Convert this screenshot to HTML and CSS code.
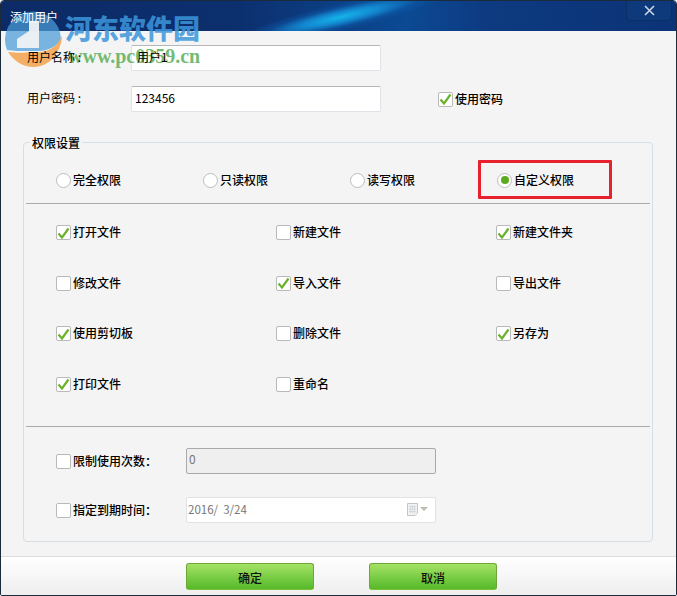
FILE: index.html
```html
<!DOCTYPE html>
<html lang="zh-CN">
<head>
    <meta charset="UTF-8">
    <meta name="viewport" content="width=device-width, initial-scale=1.0">
    <title>添加用户</title>
    <link rel="stylesheet" href="styles.css">
</head>
<body>
    <div class="window">
        <div class="titlebar">
            <span class="title">添加用户</span>
            <button class="close-btn">
                <svg width="11" height="11" viewBox="0 0 11 11"><path d="M1 1L10 10M10 1L1 10" stroke="#c9d6e6" stroke-width="1.6" fill="none"/></svg>
            </button>
        </div>

        <div class="content">
            <div class="user-rows">
                <div class="user-row">
                    <span class="user-label">用户名称 :</span>
                    <div class="field"><span class="name-text">用户1</span></div>
                </div>
                <div class="user-row">
                    <span class="user-label">用户密码 :</span>
                    <div class="field"><span>123456</span></div>
                    <label class="check use-pwd"><span class="box checked"><svg width="13" height="12" viewBox="0 0 13 12"><path d="M1.5 6.5L5 10.5L11.5 1.5" stroke="#6cb12c" stroke-width="2.2" fill="none"/></svg></span>使用密码</label>
                </div>
            </div>

            <div class="group">
                <span class="legend">权限设置</span>

                <div class="radios">
                    <label class="radio"><span class="dot"></span>完全权限</label>
                    <label class="radio"><span class="dot"></span>只读权限</label>
                    <label class="radio"><span class="dot"></span>读写权限</label>
                    <label class="radio"><span class="dot on"></span>自定义权限</label>
                </div>

                <div class="perms">
                    <label class="check"><span class="box checked"><svg width="13" height="12" viewBox="0 0 13 12"><path d="M1.5 6.5L5 10.5L11.5 1.5" stroke="#6cb12c" stroke-width="2.2" fill="none"/></svg></span>打开文件</label>
                    <label class="check"><span class="box"></span>新建文件</label>
                    <label class="check"><span class="box checked"><svg width="13" height="12" viewBox="0 0 13 12"><path d="M1.5 6.5L5 10.5L11.5 1.5" stroke="#6cb12c" stroke-width="2.2" fill="none"/></svg></span>新建文件夹</label>
                    <label class="check"><span class="box"></span>修改文件</label>
                    <label class="check"><span class="box checked"><svg width="13" height="12" viewBox="0 0 13 12"><path d="M1.5 6.5L5 10.5L11.5 1.5" stroke="#6cb12c" stroke-width="2.2" fill="none"/></svg></span>导入文件</label>
                    <label class="check"><span class="box"></span>导出文件</label>
                    <label class="check"><span class="box checked"><svg width="13" height="12" viewBox="0 0 13 12"><path d="M1.5 6.5L5 10.5L11.5 1.5" stroke="#6cb12c" stroke-width="2.2" fill="none"/></svg></span>使用剪切板</label>
                    <label class="check"><span class="box"></span>删除文件</label>
                    <label class="check"><span class="box checked"><svg width="13" height="12" viewBox="0 0 13 12"><path d="M1.5 6.5L5 10.5L11.5 1.5" stroke="#6cb12c" stroke-width="2.2" fill="none"/></svg></span>另存为</label>
                    <label class="check"><span class="box checked"><svg width="13" height="12" viewBox="0 0 13 12"><path d="M1.5 6.5L5 10.5L11.5 1.5" stroke="#6cb12c" stroke-width="2.2" fill="none"/></svg></span>打印文件</label>
                    <label class="check"><span class="box"></span>重命名</label>
                </div>

                <div class="limits">
                    <div class="limit-row">
                        <label class="check limit-label"><span class="box"></span>限制使用次数：</label>
                        <div class="field limit-field disabled">0</div>
                    </div>
                    <div class="limit-row">
                        <label class="check limit-label"><span class="box"></span>指定到期时间：</label>
                        <div class="field limit-field date">
                            <span>2016/&nbsp; 3/24</span>
                            <span class="date-icons">
                                <svg width="11" height="13" viewBox="0 0 11 13"><path d="M.5.5H10.5V10L8 12.5H.5Z" fill="#f2f2f2" stroke="#c4c4c4"/><path d="M2 3.5H9M2 6H9M2 8.5H9M3.5 2.5V10M5.5 2.5V10M7.5 2.5V10" stroke="#cfd3d8" stroke-width=".8"/></svg>
                                <span class="caret"></span>
                            </span>
                        </div>
                    </div>
                </div>
            </div>
        </div>

        <div class="footer">
            <button class="green-btn">确定</button>
            <button class="green-btn">取消</button>
        </div>

        <!-- red annotation box -->
        <div class="annotation"></div>

        <!-- site watermark -->
        <div class="watermark">
            <svg class="wm-logo" width="66" height="70" viewBox="0 0 66 70">
                <path d="M6 49A28 28 0 1 1 60 38C56 46 46 50 38 50H29C20 50 12 50 6 49Z" fill="#4a9bd8" opacity=".72"/>
                <path d="M16 47V38L28 30V20H38V47Z" fill="#f4f4f4" opacity=".92"/>
                <path d="M7 51C16 52 24 52 29 51H38C47 51 56 46 61 35C60 52 48 66 33 66C22 66 13 60 7 51Z" fill="#f2a24c" opacity=".85"/>
            </svg>
            <span class="wm-name">河东软件园</span>
            <span class="wm-url">www.pc0359.cn</span>
        </div>
    </div>
</body>
</html>
```

FILE: styles.css
```css
* {
    box-sizing: border-box;
}
body {
    margin: 0;
    font-family: "Noto Sans CJK SC", "Liberation Sans", sans-serif;
    font-size: 12px;
    font-weight: 500;
    color: #000;
    background-color: #fff;
}
.window {
    position: relative;
    width: 677px;
    height: 596px;
    display: flex;
    flex-direction: column;
    background-color: #f4f4f4;
    border: 1px solid #1c2b3c;
    border-radius: 4px 4px 2px 2px;
    overflow: hidden;
}
.titlebar {
    position: relative;
    height: 30px;
    flex: none;
    display: flex;
    justify-content: space-between;
    overflow: hidden;
    background: linear-gradient(90deg, #0c2b66 0%, #0c2f6e 35%, #0b4a94 60%, #0d3a80 72%, #0c3377 100%);
}
.titlebar::before {
    content: "";
    position: absolute;
    left: 230px;
    top: 2px;
    width: 220px;
    height: 28px;
    transform: rotate(-13deg);
    background: radial-gradient(ellipse closest-side, #14b4ea 0%, #1388d0 35%, rgba(14,90,170,.5) 70%, rgba(14,60,130,0) 100%);
}
.title {
    position: relative;
    z-index: 2;
    padding: 4px 0 0 9px;
    color: #fff;
    line-height: 24px;
    font-weight: 400;
}
.close-btn {
    position: relative;
    width: 46px;
    height: 20px;
    margin-right: 4px;
    padding: 0;
    display: flex;
    align-items: center;
    justify-content: center;
    background-color: #0e3a7c;
    border: 1px solid #0a2f66;
    border-top: none;
    border-radius: 0 0 5px 5px;
}
.content {
    flex: 1;
    padding: 14px 23px 0 22px;
}
.user-rows {
    display: flex;
    flex-direction: column;
    gap: 15px;
    padding-bottom: 30px;
}
.user-row {
    height: 26px;
    display: flex;
    align-items: center;
    padding-left: 4px;
}
.user-label {
    position: relative;
    z-index: 2;
    width: 104px;
    flex: none;
    padding-bottom: 3px;
    font-weight: 400;
}
.field {
    width: 250px;
    height: 26px;
    padding: 0 3px 4px;
    display: flex;
    align-items: center;
    font-weight: 400;
    background-color: #fff;
    border: 1px solid #dfe2e6;
    border-top-color: #b4b6bb;
    border-radius: 2px;
}
.field span {
    position: relative;
    z-index: 2;
}
.field .name-text {
    padding-left: 2px;
}
.use-pwd {
    margin-left: 57px;
}
.check, .radio {
    display: flex;
    align-items: center;
    gap: 2px;
    height: 16px;
    padding-bottom: 2px;
    white-space: nowrap;
}
.box {
    width: 15px;
    height: 15px;
    margin-top: 2px;
    flex: none;
    display: flex;
    align-items: center;
    justify-content: center;
    background-color: #fff;
    border: 1px solid #b9b9b9;
    border-radius: 2px;
}
.dot {
    width: 15px;
    height: 15px;
    margin-top: 2px;
    flex: none;
    display: flex;
    align-items: center;
    justify-content: center;
    background-color: #fff;
    border: 1px solid #bdbdbd;
    border-radius: 50%;
}
.dot.on::after {
    content: "";
    width: 8px;
    height: 8px;
    border-radius: 50%;
    background-color: #5cab1e;
}
.group {
    position: relative;
    width: 630px;
    height: 400px;
    padding: 0 2px;
    border: 1px solid #d6dee6;
    border-radius: 4px;
}
.legend {
    position: absolute;
    left: 6px;
    top: -8px;
    padding: 0 2px;
    line-height: 15px;
    background-color: #f4f4f4;
}
.radios {
    height: 61px;
    padding: 29px 0 0 30px;
    display: grid;
    grid-template-columns: repeat(4, 147px);
    align-items: start;
    border-bottom: 1px solid #a9a9a9;
}
.perms {
    height: 223px;
    padding: 20.5px 0 0 30px;
    display: grid;
    grid-template-columns: repeat(3, 220px);
    grid-auto-rows: 50.5px;
    align-items: start;
    border-bottom: 1px solid #a9a9a9;
}
.limits {
    display: flex;
    flex-direction: column;
    gap: 23px;
    padding: 21px 0 0 30px;
}
.limit-row {
    display: flex;
    align-items: center;
}
.limit-label {
    width: 130px;
}
.limit-field {
    color: #777;
}
.disabled {
    background-color: #efefef;
    border-color: #a9a9a9;
    padding-left: 2px;
    padding-bottom: 5px;
}
.date {
    justify-content: space-between;
    padding-left: 1px;
    padding-bottom: 2px;
    font-size: 11.5px;
    border-top-color: #dfe2e6;
}
.date-icons {
    display: flex;
    align-items: center;
    gap: 2px;
    padding-right: 4px;
}
.caret {
    width: 0;
    height: 0;
    border-left: 4px solid transparent;
    border-right: 4px solid transparent;
    border-top: 4px solid #bdbdb4;
}
.footer {
    height: 39px;
    flex: none;
    display: flex;
    gap: 55px;
    padding: 6px 0 0 185px;
    background: linear-gradient(#ffffff, #eeeeee);
    border-top: 1px solid #dcdcdc;
}
.green-btn {
    width: 128px;
    height: 27px;
    padding: 2px 0 0;
    font: inherit;
    color: #111;
    background: linear-gradient(#a4e264, #55b92a);
    border: 1px solid #6fa63a;
    border-bottom-color: #7cc13a;
    border-radius: 3px;
}
.annotation {
    position: absolute;
    left: 477px;
    top: 159px;
    width: 134px;
    height: 39px;
    border: 3px solid #e8212f;
    border-radius: 1px;
}
.watermark {
    position: absolute;
    left: 0;
    top: 0;
    z-index: 1;
    width: 214px;
    height: 72px;
    pointer-events: none;
}
.wm-logo {
    position: absolute;
    left: 0;
    top: 0;
}
.wm-name {
    position: absolute;
    left: 64px;
    top: 11px;
    font-size: 27px;
    font-weight: 900;
    line-height: 32px;
    color: rgba(60,150,220,.85);
}
.wm-url {
    position: absolute;
    left: 67px;
    top: 45px;
    font-family: "Liberation Serif", serif;
    font-size: 20px;
    font-weight: bold;
    line-height: 20px;
    color: rgba(90,175,90,.85);
}
```
